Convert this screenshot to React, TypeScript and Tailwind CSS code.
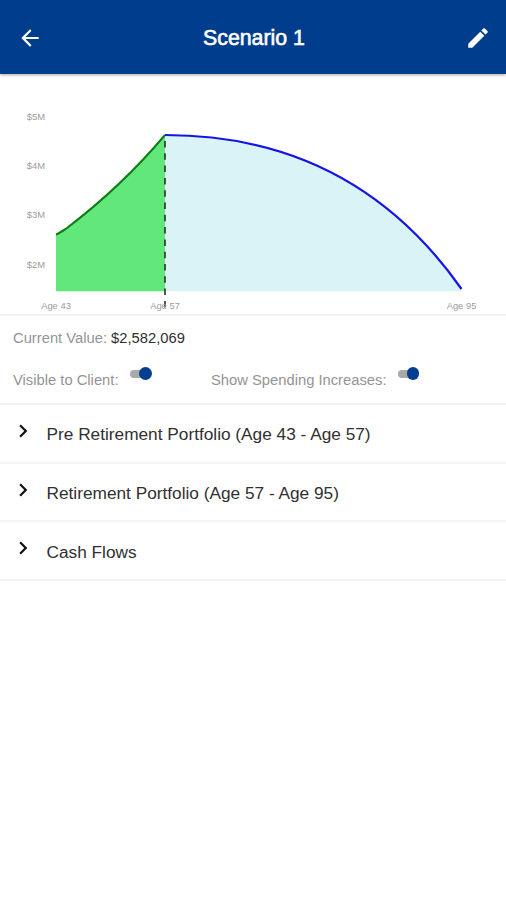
const yTicks = ['$5M', '$4M', '$3M', '$2M'];
const sections = [
  'Pre Retirement Portfolio (Age 43 - Age 57)',
  'Retirement Portfolio (Age 57 - Age 95)',
  'Cash Flows',
];

function Icon({ d, className = '' }: { d: string; className?: string }) {
  return (
    <svg viewBox="0 0 24 24" className={`size-[26px] shrink-0 ${className}`} fill="currentColor">
      <path d={d} />
    </svg>
  );
}

function Header() {
  return (
    <header className="flex h-[74px] items-center justify-between bg-[#003e8d] pt-px pr-[15px] pl-[17px] text-white shadow-[0_1px_3px_rgba(0,0,0,0.35)]">
      <button aria-label="Back" className="flex">
        <Icon d="M20 11H7.83l5.59-5.59L12 4l-8 8 8 8 1.41-1.41L7.83 13H20v-2z" />
      </button>
      <h1 className="text-[21.3px] leading-6 [-webkit-text-stroke:0.6px_white]">Scenario 1</h1>
      <button aria-label="Edit" className="flex">
        <Icon d="M3 17.25V21h3.75L17.81 9.94l-3.75-3.75L3 17.25zM20.71 7.04c.39-.39.39-1.02 0-1.41l-2.34-2.34c-.39-.39-1.02-.39-1.41 0l-1.83 1.83 3.75 3.75 1.83-1.83z" />
      </button>
    </header>
  );
}

function Chart() {
  return (
    <svg viewBox="0 0 506 240" className="block h-[240px] w-full">
      <path d="M56 160.5C60 159 64 156 67 154Q122 112 165 61V217.3H56Z" fill="#62e87a" />
      <path d="M165 61C295 61 392 116 461.5 215V217.3H165Z" fill="#d9f3f6" />
      <path d="M56 160.5C60 159 64 156 67 154Q122 112 165 61" fill="none" stroke="#0b7d14" strokeWidth="2" />
      <path d="M165 61C295 61 392 116 461.5 215" fill="none" stroke="#1414e6" strokeWidth="2.2" />
      <path d="M165 67V235" stroke="#222" strokeWidth="1.5" strokeDasharray="6.5 5.8" />
      <g fill="#9c9c9c" fontSize="9.4">
        {yTicks.map((tick, i) => (
          <text key={tick} x="45" y={46 + i * 49.2} textAnchor="end">{tick}</text>
        ))}
        <text x="56" y="235" textAnchor="middle">Age 43</text>
        <text x="165" y="235" textAnchor="middle">Age 57</text>
        <text x="461.5" y="235" textAnchor="middle">Age 95</text>
      </g>
    </svg>
  );
}

function Toggle() {
  return (
    <span role="switch" aria-checked="true" className="mt-[3px] flex h-[13px] w-[22px] items-center justify-end rounded-full">
      <span className="-mr-2 h-2 w-[17px] rounded-full bg-[#a9a9a9]" />
      <span className="relative size-[12.5px] rounded-full bg-[#003e92]" />
    </span>
  );
}

export default function App() {
  return (
    <main className="h-[900px] w-full overflow-hidden bg-white font-['Liberation_Sans',Arial,sans-serif]">
      <Header />
      <Chart />
      <section className="h-[91px] border-y-2 border-[#f2f2f2] pl-[13px] text-[14.75px] leading-5 text-[#949494]">
        <p className="pt-3">
          Current Value: <span className="text-[#303030]">$2,582,069</span>
        </p>
        <div className="flex pt-[16px]">
          <div className="flex w-[198px] gap-[11px]">
            <span className="pt-[6px]">Visible to Client:</span>
            <Toggle />
          </div>
          <div className="flex gap-[11px]">
            <span className="pt-[6px]">Show Spending Increases:</span>
            <Toggle />
          </div>
        </div>
      </section>
      {sections.map((title) => (
        <section key={title} className="flex h-[58.7px] items-center gap-[11px] border-b-2 border-[#f4f4f4] pl-[9.5px]">
          <Icon className="mb-[5px] text-[#111]" d="M10 6L8.59 7.41 13.17 12l-4.58 4.59L10 18l6-6z" />
          <h2 className="pt-[2px] text-[17.25px] leading-6 text-[#303030]">{title}</h2>
        </section>
      ))}
    </main>
  );
}
